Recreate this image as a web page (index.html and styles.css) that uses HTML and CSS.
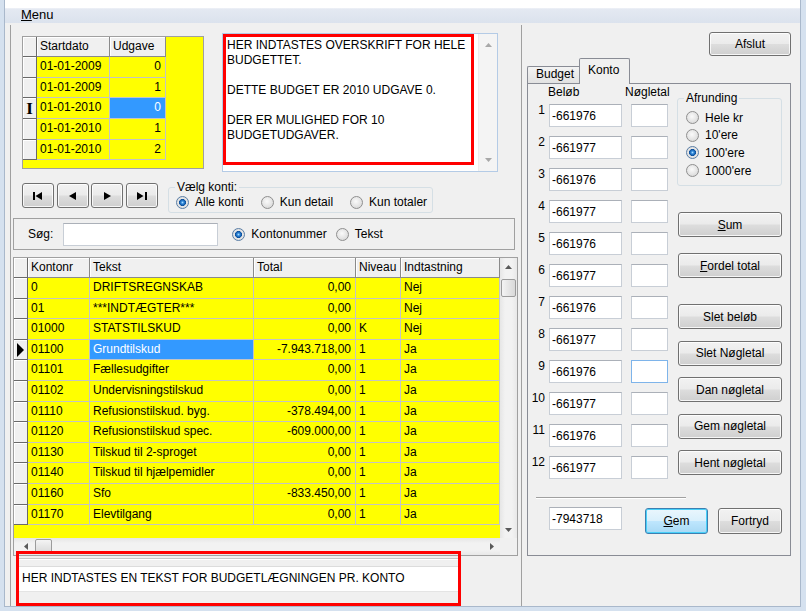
FILE: index.html
```html
<!DOCTYPE html>
<html lang="da">
<head>
    <meta charset="UTF-8">
    <title>Budget</title>
    <link rel="stylesheet" href="styles.css">
</head>
<body>
<div class="window">
    <div class="menubar"><span><u>M</u>enu</span></div>
    <div class="client">
        <div class="left">
            <div class="top">
                <div class="sgrid">
                    <div class="i"></div><div class="hd">Startdato</div><div class="hd">Udgave</div>
                    <div class="i"></div><div class="c">01-01-2009</div><div class="c r">0</div>
                    <div class="i"></div><div class="c">01-01-2009</div><div class="c r">1</div>
                    <div class="i"><span class="ibeam">I</span></div><div class="c">01-01-2010</div><div class="c r sel">0</div>
                    <div class="i"></div><div class="c">01-01-2010</div><div class="c r">1</div>
                    <div class="i"></div><div class="c">01-01-2010</div><div class="c r">2</div>
                </div>
                <div class="memo">
                    <div class="memo-text">
                        <p>HER INDTASTES OVERSKRIFT FOR HELE BUDGETTET.</p>
                        <p>DETTE BUDGET ER 2010 UDGAVE 0.</p>
                        <p>DER ER MULIGHED FOR 10 BUDGETUDGAVER.</p>
                    </div>
                    <div class="vscroll memo-scroll">
                        <span class="sarrow"><svg width="7" height="4" viewBox="0 0 7 4"><path d="M0 4L3.5 0L7 4Z"/></svg></span>
                        <span class="fill"></span>
                        <span class="sarrow"><svg width="7" height="4" viewBox="0 0 7 4"><path d="M0 0L7 0L3.5 4Z"/></svg></span>
                    </div>
                </div>
            </div>

            <div class="navrow">
                <button class="btn navbtn"><svg width="10" height="8" viewBox="0 0 10 8"><rect x="0" y="0" width="2" height="8"/><path d="M2.5 4L9 0L9 8Z"/></svg></button>
                <button class="btn navbtn"><svg width="7" height="8" viewBox="0 0 7 8"><path d="M0 4L7 0L7 8Z"/></svg></button>
                <button class="btn navbtn"><svg width="7" height="8" viewBox="0 0 7 8"><path d="M0 0L7 4L0 8Z"/></svg></button>
                <button class="btn navbtn"><svg width="10" height="8" viewBox="0 0 10 8"><path d="M0 0L6.5 4L0 8Z"/><rect x="8" y="0" width="2" height="8"/></svg></button>
                <div class="group konti">
                    <span class="group-title">Vælg konti:</span>
                    <div class="opts">
                        <label class="opt"><span class="radio on"></span>Alle konti</label>
                        <label class="opt"><span class="radio"></span>Kun detail</label>
                        <label class="opt"><span class="radio"></span>Kun totaler</label>
                    </div>
                </div>
            </div>

            <div class="search">
                <span>Søg:</span>
                <input class="field search-field" type="text">
                <label class="opt"><span class="radio on"></span>Kontonummer</label>
                <label class="opt"><span class="radio"></span>Tekst</label>
            </div>

            <div class="mgrid">
                <div class="mcells">
                    <div class="i"></div><div class="hd">Kontonr</div><div class="hd">Tekst</div><div class="hd">Total</div><div class="hd">Niveau</div><div class="hd">Indtastning</div>
                    <div class="i"></div><div class="c">0</div><div class="c">DRIFTSREGNSKAB</div><div class="c r">0,00</div><div class="c"></div><div class="c">Nej</div>
                    <div class="i"></div><div class="c">01</div><div class="c">***INDTÆGTER***</div><div class="c r">0,00</div><div class="c"></div><div class="c">Nej</div>
                    <div class="i"></div><div class="c">01000</div><div class="c">STATSTILSKUD</div><div class="c r">0,00</div><div class="c">K</div><div class="c">Nej</div>
                    <div class="i"><svg width="7" height="14" viewBox="0 0 7 14"><path d="M0 0L7 7L0 14Z"/></svg></div><div class="c">01100</div><div class="c sel">Grundtilskud</div><div class="c r">-7.943.718,00</div><div class="c">1</div><div class="c">Ja</div>
                    <div class="i"></div><div class="c">01101</div><div class="c">Fællesudgifter</div><div class="c r">0,00</div><div class="c">1</div><div class="c">Ja</div>
                    <div class="i"></div><div class="c">01102</div><div class="c">Undervisningstilskud</div><div class="c r">0,00</div><div class="c">1</div><div class="c">Ja</div>
                    <div class="i"></div><div class="c">01110</div><div class="c">Refusionstilskud. byg.</div><div class="c r">-378.494,00</div><div class="c">1</div><div class="c">Ja</div>
                    <div class="i"></div><div class="c">01120</div><div class="c">Refusionstilskud spec.</div><div class="c r">-609.000,00</div><div class="c">1</div><div class="c">Ja</div>
                    <div class="i"></div><div class="c">01130</div><div class="c">Tilskud til 2-sproget</div><div class="c r">0,00</div><div class="c">1</div><div class="c">Ja</div>
                    <div class="i"></div><div class="c">01140</div><div class="c">Tilskud til hjælpemidler</div><div class="c r">0,00</div><div class="c">1</div><div class="c">Ja</div>
                    <div class="i"></div><div class="c">01160</div><div class="c">Sfo</div><div class="c r">-833.450,00</div><div class="c">1</div><div class="c">Ja</div>
                    <div class="i"></div><div class="c">01170</div><div class="c">Elevtilgang</div><div class="c r">0,00</div><div class="c">1</div><div class="c">Ja</div>
                </div>
                <div class="vscroll">
                    <span class="sarrow"><svg width="7" height="4" viewBox="0 0 7 4"><path d="M0 4L3.5 0L7 4Z"/></svg></span>
                    <span class="thumb"></span>
                    <span class="fill"></span>
                    <span class="sarrow"><svg width="7" height="4" viewBox="0 0 7 4"><path d="M0 0L7 0L3.5 4Z"/></svg></span>
                </div>
                <div class="hscroll">
                    <span class="sarrow"><svg width="4" height="7" viewBox="0 0 4 7"><path d="M4 0L4 7L0 3.5Z"/></svg></span>
                    <span class="thumb"></span>
                    <span class="fill"></span>
                    <span class="sarrow"><svg width="4" height="7" viewBox="0 0 4 7"><path d="M0 0L4 3.5L0 7Z"/></svg></span>
                </div>
                <div class="corner"></div>
            </div>

            <div class="notes">
                <div class="notes-line"></div>
                <div class="notes-memo">HER INDTASTES EN TEKST FOR BUDGETLÆGNINGEN PR. KONTO</div>
            </div>
        </div>

        <div class="right">
            <div class="topbar"><button class="btn afslut">Afslut</button></div>
            <div class="tabs">
                <div class="tab">Budget</div>
                <div class="tab active">Konto</div>
            </div>
            <div class="tabpage">
                <div class="konto-main">
                    <div class="amounts">
                        <div class="amount-head"><span class="head-belob">Beløb</span><span>Nøgletal</span></div>
                        <div class="arow"><span class="idx">1</span><input class="field amt" value="-661976"><input class="field key"></div>
                        <div class="arow"><span class="idx">2</span><input class="field amt" value="-661977"><input class="field key"></div>
                        <div class="arow"><span class="idx">3</span><input class="field amt" value="-661976"><input class="field key"></div>
                        <div class="arow"><span class="idx">4</span><input class="field amt" value="-661977"><input class="field key"></div>
                        <div class="arow"><span class="idx">5</span><input class="field amt" value="-661976"><input class="field key"></div>
                        <div class="arow"><span class="idx">6</span><input class="field amt" value="-661977"><input class="field key"></div>
                        <div class="arow"><span class="idx">7</span><input class="field amt" value="-661976"><input class="field key"></div>
                        <div class="arow"><span class="idx">8</span><input class="field amt" value="-661977"><input class="field key"></div>
                        <div class="arow"><span class="idx">9</span><input class="field amt" value="-661976"><input class="field key hot"></div>
                        <div class="arow"><span class="idx">10</span><input class="field amt" value="-661977"><input class="field key"></div>
                        <div class="arow"><span class="idx">11</span><input class="field amt" value="-661976"><input class="field key"></div>
                        <div class="arow"><span class="idx">12</span><input class="field amt" value="-661977"><input class="field key"></div>
                    </div>
                    <div class="side">
                        <div class="group afrunding">
                            <span class="group-title">Afrunding</span>
                            <div class="vopts">
                                <label class="opt"><span class="radio"></span>Hele kr</label>
                                <label class="opt"><span class="radio"></span>10'ere</label>
                                <label class="opt"><span class="radio on"></span>100'ere</label>
                                <label class="opt"><span class="radio"></span>1000'ere</label>
                            </div>
                        </div>
                        <button class="btn side-btn gap-lg"><u>S</u>um</button>
                        <button class="btn side-btn gap-md"><u>F</u>ordel total</button>
                        <button class="btn side-btn gap-lg">Slet beløb</button>
                        <button class="btn side-btn gap-sm">Slet Nøgletal</button>
                        <button class="btn side-btn gap-sm">Dan nøgletal</button>
                        <button class="btn side-btn gap-sm">Gem nøgletal</button>
                        <button class="btn side-btn gap-sm">Hent nøgletal</button>
                    </div>
                </div>
                <div class="sep"></div>
                <div class="total-row">
                    <input class="field amt" value="-7943718">
                    <button class="btn default gem"><u>G</u>em</button>
                    <button class="btn fortryd">Fortryd</button>
                </div>
            </div>
        </div>
    </div>
</div>
</body>
</html>
```

FILE: styles.css
```css
* {
    box-sizing: border-box;
}
html, body {
    margin: 0;
    padding: 0;
}
body {
    width: 806px;
    height: 611px;
    overflow: hidden;
    background: #ffffff;
    font-family: "Liberation Sans", Arial, sans-serif;
    font-size: 12px;
    color: #000;
}
button, input {
    font: inherit;
    color: inherit;
    margin: 0;
}

/* window frame */
.window {
    height: 611px;
    display: flex;
    flex-direction: column;
    border-left: 4px solid #d5e1ef;
    border-right: 5px solid #d5e1ef;
    border-bottom: 4px solid #d5e1ef;
}
.menubar {
    height: 23px;
    flex: none;
    padding: 8px 0 0 16px;
    font-size: 13px;
    line-height: 13px;
    background: linear-gradient(#ffffff 0, #ffffff 34%, #e4e9f2 38%, #dbe2ed 100%);
    border-left: 1px solid #a9b8cb;
    border-right: 1px solid #a9b8cb;
}
.client {
    flex: 1;
    display: flex;
    padding: 2px 0 0 5px;
    background: #f0f0f0;
    border: 1px solid #a9b8cb;
    border-top: none;
}

/* left side */
.left {
    width: 512px;
    flex: none;
    display: flex;
    flex-direction: column;
    border-left: 1px solid #a0a0a0;
    border-right: 1px solid #a0a0a0;
}
.top {
    height: 153px;
    flex: none;
    display: flex;
    align-items: flex-start;
    padding-left: 11px;
}

/* data grids */
.sgrid {
    margin-top: 11px;
    width: 182px;
    height: 133px;
    flex: none;
    background: #ffff00;
    border: 1px solid #a0a0a0;
    display: grid;
    grid-template-columns: 14px 73px 56px;
    grid-template-rows: 20px repeat(5, 20.7px);
    align-content: start;
}
.i {
    background: #f0f0f0;
    border-right: 1px solid #696969;
    border-bottom: 1px solid #696969;
    box-shadow: inset 1px 1px #ffffff;
    display: flex;
    align-items: center;
    justify-content: center;
}
.ibeam {
    font-family: "Liberation Serif", serif;
    font-weight: bold;
    font-size: 17px;
    line-height: 17px;
}
.hd {
    background: #f0f0f0;
    border-right: 1px solid #8a8a8a;
    border-bottom: 1px solid #8a8a8a;
    box-shadow: inset 1px 1px #ffffff;
    padding-left: 3px;
    line-height: 19px;
    white-space: nowrap;
    overflow: hidden;
}
.c {
    border-right: 1px solid #c4c4c4;
    border-bottom: 1px solid #c4c4c4;
    padding: 0 3px;
    line-height: 19px;
    white-space: nowrap;
    overflow: hidden;
}
.c.r {
    text-align: right;
    padding-right: 4px;
}
.c.sel {
    background: #3399ff;
    color: #ffffff;
}

/* memo */
.memo {
    margin: 8px 0 0 18px;
    width: 276px;
    height: 139px;
    flex: none;
    display: flex;
    background: #ffffff;
    border: 1px solid #b4cbe6;
}
.memo-text {
    width: 251px;
    height: 131px;
    border: 3px solid #ff0000;
    padding: 1px 0 0 1px;
    line-height: 15px;
}
.memo-text p {
    margin: 0 0 15px;
}

/* scrollbars */
.vscroll {
    display: flex;
    flex-direction: column;
    align-items: center;
    background: linear-gradient(to right, #e6e6e6, #f2f2f2 30%, #f2f2f2 70%, #e8e8e8);
}
.vscroll .sarrow {
    height: 17px;
}
.sarrow {
    width: 100%;
    flex: none;
    display: flex;
    align-items: center;
    justify-content: center;
    fill: #5a5a5a;
}
.fill {
    flex: 1;
}
.thumb {
    flex: none;
    border: 1px solid #9b9b9b;
    border-radius: 2px;
    background: linear-gradient(to right, #f4f4f4, #e6e6e6 50%, #d9d9d9);
}
.vscroll .thumb {
    width: 15px;
    height: 18px;
    margin-top: 4px;
}
.memo-scroll {
    width: 19px;
    margin-left: auto;
    background: #f4f4f4;
    border-left: 1px solid #ececec;
}
.memo-scroll .sarrow {
    height: 22px;
    fill: #a8a8a8;
}
.hscroll {
    display: flex;
    align-items: center;
    padding-left: 3px;
    background: linear-gradient(#e6e6e6, #f2f2f2 30%, #f2f2f2 70%, #e8e8e8);
}
.hscroll .sarrow {
    width: 17px;
    height: 100%;
}
.hscroll .thumb {
    width: 17px;
    height: 15px;
    margin-left: 1px;
    background: linear-gradient(#f4f4f4, #e6e6e6 50%, #d9d9d9);
}
.corner {
    background: #f0f0f0;
}

/* buttons */
.btn {
    border: 1px solid #707070;
    border-radius: 3px;
    background: linear-gradient(#f2f2f2 0%, #ebebeb 48%, #dddddd 52%, #cfcfcf 100%);
    box-shadow: inset 0 0 0 1px rgba(255, 255, 255, 0.8);
    padding: 0;
    text-align: center;
}
.btn.default {
    border-color: #3c7fb1;
    background: linear-gradient(#eaf6fd 0%, #d9f0fc 48%, #bee6fd 52%, #a7d9f5 100%);
    box-shadow: inset 0 0 0 1px #48d0f9;
}

/* navigation row */
.navrow {
    height: 35px;
    flex: none;
    display: flex;
    align-items: flex-start;
    padding: 5px 0 0 11px;
}
.navbtn {
    width: 32px;
    height: 25px;
    flex: none;
    margin-right: 2.5px;
    display: flex;
    align-items: center;
    justify-content: center;
    fill: #000;
}
.group {
    border: 1px solid #d5dfe5;
    border-radius: 3px;
}
.group-title {
    display: block;
    width: max-content;
    margin: -7px 0 0 5px;
    padding: 0 2px;
    background: #f0f0f0;
    line-height: 13px;
}
.konti {
    margin: 4px 0 0 8px;
    width: 265px;
    height: 26px;
    flex: none;
}
.konti .group-title {
    margin-left: 6px;
}
.opts {
    display: flex;
    height: 16px;
    padding-left: 7px;
    gap: 17px;
}
.opt {
    display: inline-flex;
    align-items: center;
    gap: 6px;
    white-space: nowrap;
}
.radio {
    width: 13px;
    height: 13px;
    flex: none;
    border-radius: 50%;
    border: 1px solid #8f8f8f;
    background: radial-gradient(circle at 45% 40%, #fafafa 0, #e6e6e6 50%, #d0d0d0 100%);
}
.radio.on {
    border-color: #5a7ea6;
    background: radial-gradient(circle, #a8dcff 0, #2f86d8 1.5px, #0c4f9c 3.2px, #e8e8e8 3.8px, #d2d2d2 100%);
}

/* search */
.search {
    margin: 5px 0 0 2px;
    width: 502px;
    height: 32px;
    flex: none;
    border: 1px solid #a0a0a0;
    display: flex;
    align-items: center;
    padding-left: 14px;
}
.field {
    height: 23px;
    border: 1px solid #c8ced6;
    border-top-color: #abb0b8;
    background: #ffffff;
    padding: 0 2px;
    line-height: 21px;
}
.search-field {
    width: 155px;
    margin: 0 14px 0 10px;
}
.search .opt + .opt {
    margin-left: 9px;
}

/* main grid */
.mgrid {
    margin: 7px 0 0 2px;
    width: 505px;
    height: 299px;
    flex: none;
    border: 1px solid #a0a0a0;
    display: grid;
    grid-template-columns: 486px 17px;
    grid-template-rows: 280px 17px;
}
.mcells {
    background: #ffff00;
    display: grid;
    grid-template-columns: 14px 62px 164px 102px 45px 99px;
    grid-template-rows: 20px repeat(12, 20.6px);
    align-content: start;
}

/* bottom notes */
.notes {
    position: relative;
    margin: -5px 0 0 5px;
    width: 445px;
    height: 55px;
    flex: none;
    border: 3px solid #ff0000;
    padding-top: 4px;
}
.notes-line {
    border-top: 1px solid #c8c8c8;
    border-bottom: 1px solid #ffffff;
}
.notes-memo {
    margin-top: 6px;
    height: 26px;
    background: #ffffff;
    border-top: 1px solid #dcdcdc;
    border-bottom: 1px solid #e4e4e4;
    padding-left: 3px;
    line-height: 23px;
    white-space: nowrap;
}

/* right side */
.right {
    width: 278px;
    flex: none;
    display: flex;
    flex-direction: column;
    padding: 7px 9px 0 5px;
}
.topbar {
    display: flex;
    justify-content: flex-end;
}
.afslut {
    width: 82px;
    height: 24px;
}
.tabs {
    margin-top: 2px;
    height: 25px;
    display: flex;
    align-items: flex-end;
}
.tab {
    width: 52px;
    height: 17px;
    padding-left: 8px;
    line-height: 15px;
    border: 1px solid #898c95;
    border-right: none;
    border-bottom: none;
    border-radius: 2px 0 0 0;
    background: linear-gradient(#f3f3f3, #e2e2e2);
}
.tab.active {
    position: relative;
    width: 51px;
    height: 26px;
    margin-bottom: -1px;
    padding: 4px 0 0 8px;
    line-height: 14px;
    border-right: 1px solid #898c95;
    border-radius: 2px 2px 0 0;
    background: #f0f0f0;
}
.tabpage {
    height: 473px;
    border: 1px solid #898c95;
    display: flex;
    flex-direction: column;
}
.konto-main {
    display: flex;
}
.amounts {
    width: 149px;
    flex: none;
}
.amount-head {
    height: 20px;
    padding: 1px 0 0 20px;
    line-height: 14px;
    display: flex;
}
.head-belob {
    width: 77px;
}
.arow {
    display: flex;
    height: 23px;
    margin-bottom: 9px;
}
.idx {
    width: 17px;
    text-align: right;
    line-height: 14px;
    margin-top: -1px;
}
.amt {
    width: 73px;
    margin-left: 4px;
}
.key {
    width: 37px;
    margin-left: 9px;
}
.key.hot {
    border-color: #7eb4ea;
}
.side {
    width: 105px;
    flex: none;
    display: flex;
    flex-direction: column;
}
.afrunding {
    margin-top: 14px;
    height: 88px;
}
.afrunding .group-title {
    margin-left: 6px;
}
.vopts {
    display: flex;
    flex-direction: column;
    padding: 4px 0 0 8px;
}
.vopts .opt {
    height: 17.6px;
}
.side-btn {
    width: 104px;
    height: 25px;
    margin-left: 1px;
}
.gap-lg {
    margin-top: 26px;
}
.gap-md {
    margin-top: 16px;
}
.gap-sm {
    margin-top: 11.5px;
}
.sep {
    margin: 9px 0 0 8px;
    width: 150px;
    border-top: 1px solid #a0a0a0;
    border-bottom: 1px solid #ffffff;
}
.total-row {
    margin-top: 8px;
    display: flex;
    align-items: flex-start;
    padding-left: 17px;
}
.gem {
    width: 63px;
    height: 26px;
    margin: 1px 0 0 23px;
}
.fortryd {
    width: 64px;
    height: 26px;
    margin: 1px 0 0 10px;
}
```
